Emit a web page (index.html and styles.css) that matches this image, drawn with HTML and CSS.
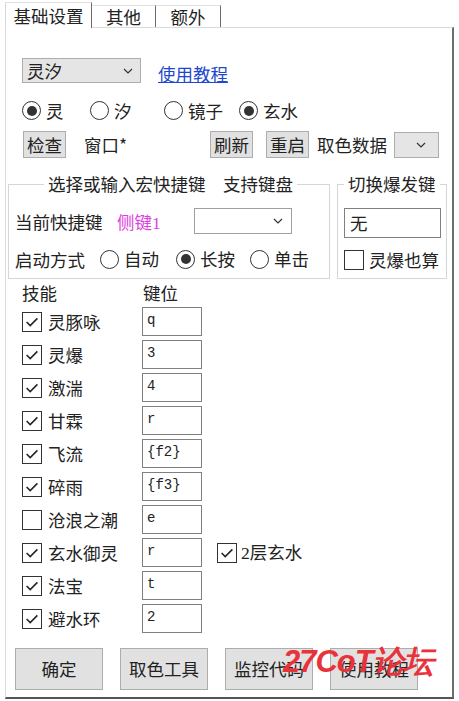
FILE: index.html
```html
<!DOCTYPE html>
<html lang="zh">
<head>
<meta charset="utf-8">
<link rel="stylesheet" href="styles.css">
</head>
<body>
<div class="window">
  <div class="tabs">
    <div class="tab active">基础设置</div>
    <div class="tab t2">其他</div>
    <div class="tab t3">额外</div>
  </div>
  <div class="panel">
    <div class="row-select">
      <div class="select sel-main"><span>灵汐</span><svg class="chev" width="10" height="6" viewBox="0 0 10 6"><path d="M1 1 L5 5 L9 1" fill="none" stroke="#333" stroke-width="1.2"/></svg></div>
      <a class="link">使用教程</a>
    </div>
    <div class="row-radio">
      <div class="ritem"><span class="radio on"></span><span>灵</span></div>
      <div class="ritem"><span class="radio"></span><span>汐</span></div>
      <div class="ritem"><span class="radio"></span><span>镜子</span></div>
      <div class="ritem"><span class="radio on"></span><span>玄水</span></div>
    </div>
    <div class="row-btns">
      <div class="btn-s">检查</div>
      <span class="win-label">窗口*</span>
      <div class="btn-s">刷新</div>
      <div class="btn-s b-restart">重启</div>
      <span class="color-label">取色数据</span>
      <div class="select sel-small"><svg class="chev" width="10" height="6" viewBox="0 0 10 6"><path d="M1 1 L5 5 L9 1" fill="none" stroke="#333" stroke-width="1.2"/></svg></div>
    </div>
    <div class="groups">
      <div class="group g1">
        <div class="gtitle t-g1">选择或输入宏快捷键　支持键盘</div>
        <div class="g1-row1">
          <span class="g1-label">当前快捷键</span>
          <span class="sidekey">侧键<span class="num">1</span></span>
          <div class="select sel-key"><svg class="chev" width="10" height="6" viewBox="0 0 10 6"><path d="M1 1 L5 5 L9 1" fill="none" stroke="#333" stroke-width="1.2"/></svg></div>
        </div>
        <div class="g1-row2">
          <span class="g1-label2">启动方式</span>
          <div class="ritem w76"><span class="radio"></span><span>自动</span></div>
          <div class="ritem w74"><span class="radio on"></span><span>长按</span></div>
          <div class="ritem"><span class="radio"></span><span>单击</span></div>
        </div>
      </div>
      <div class="group g2">
        <div class="gtitle t-g2">切换爆发键</div>
        <div class="tbox burst">无</div>
        <div class="g2-check"><span class="cb"></span><span class="cb-label">灵爆也算</span></div>
      </div>
    </div>
    <div class="skill-head"><span class="h-skill">技能</span><span>键位</span></div>
    <div class="skills">
      <div class="skill"><div class="sk-left"><span class="cb on"><svg viewBox="0 0 20 20"><path d="M4 10 L8 14 L16 6"/></svg></span><span class="cb-label">灵豚咏</span></div><div class="key">q</div></div>
      <div class="skill"><div class="sk-left"><span class="cb on"><svg viewBox="0 0 20 20"><path d="M4 10 L8 14 L16 6"/></svg></span><span class="cb-label">灵爆</span></div><div class="key">3</div></div>
      <div class="skill"><div class="sk-left"><span class="cb on"><svg viewBox="0 0 20 20"><path d="M4 10 L8 14 L16 6"/></svg></span><span class="cb-label">激湍</span></div><div class="key">4</div></div>
      <div class="skill"><div class="sk-left"><span class="cb on"><svg viewBox="0 0 20 20"><path d="M4 10 L8 14 L16 6"/></svg></span><span class="cb-label">甘霖</span></div><div class="key">r</div></div>
      <div class="skill"><div class="sk-left"><span class="cb on"><svg viewBox="0 0 20 20"><path d="M4 10 L8 14 L16 6"/></svg></span><span class="cb-label">飞流</span></div><div class="key">{f2}</div></div>
      <div class="skill"><div class="sk-left"><span class="cb on"><svg viewBox="0 0 20 20"><path d="M4 10 L8 14 L16 6"/></svg></span><span class="cb-label">碎雨</span></div><div class="key">{f3}</div></div>
      <div class="skill"><div class="sk-left"><span class="cb"></span><span class="cb-label">沧浪之潮</span></div><div class="key">e</div></div>
      <div class="skill"><div class="sk-left"><span class="cb on"><svg viewBox="0 0 20 20"><path d="M4 10 L8 14 L16 6"/></svg></span><span class="cb-label">玄水御灵</span></div><div class="key">r</div>
        <div class="extra"><span class="cb on"><svg viewBox="0 0 20 20"><path d="M4 10 L8 14 L16 6"/></svg></span><span class="extra-label"><span class="num">2</span>层玄水</span></div></div>
      <div class="skill"><div class="sk-left"><span class="cb on"><svg viewBox="0 0 20 20"><path d="M4 10 L8 14 L16 6"/></svg></span><span class="cb-label">法宝</span></div><div class="key">t</div></div>
      <div class="skill"><div class="sk-left"><span class="cb on"><svg viewBox="0 0 20 20"><path d="M4 10 L8 14 L16 6"/></svg></span><span class="cb-label">避水环</span></div><div class="key">2</div></div>
    </div>
    <div class="bottom-btns">
      <div class="btn-l">确定</div>
      <div class="btn-l">取色工具</div>
      <div class="btn-l">监控代码</div>
      <div class="btn-l">使用教程</div>
    </div>
  </div>
  <div class="watermark">27CoT论坛</div>
</div>
</body>
</html>
```
FILE: styles.css
```css
* { box-sizing: border-box; }
body {
  margin: 0;
  background: #fff;
  font-family: "Noto Sans CJK SC", sans-serif;
  font-size: 17.5px;
  color: #222;
}
.window {
  width: 459px;
  height: 701px;
  position: relative;
  overflow: hidden;
  background: #fff;
}
.tabs {
  display: flex;
  align-items: flex-end;
  height: 27px;
  padding-left: 5px;
}
.tab {
  height: 22px;
  border-top: 1px solid #e2e2e2;
  border-right: 1px solid #6d6d6d;
  display: flex;
  align-items: center;
  justify-content: center;
  line-height: 20px;
  background: #fff;
}
.tab.active {
  width: 87px;
  height: 26px;
  margin-bottom: -1px;
  border-left: 1px solid #d8d8d8;
  position: relative;
  z-index: 1;
}
.t2 { width: 64px; }
.t3 { width: 65px; }
.panel {
  margin-left: 5px;
  width: 449px;
  height: 672px;
  border-left: 1px solid #dadada;
  border-top: 1px solid #dadada;
  border-right: 2px solid #6d6d6d;
  border-bottom: 2px solid #555;
}
.select {
  background: #e5e5e5;
  border: 1px solid #adadad;
  display: flex;
  align-items: center;
  justify-content: space-between;
  line-height: 20px;
}
.row-select {
  display: flex;
  align-items: flex-start;
  margin: 30px 0 0 16px;
  height: 25px;
}
.sel-main {
  width: 119px;
  height: 25px;
  padding: 0 7px 0 4px;
}
.link {
  margin: 6px 0 0 17px;
  line-height: 20px;
  color: #1e48d0;
  text-decoration: underline;
}
.row-radio {
  display: grid;
  grid-template-columns: 68px 74px 75px auto;
  margin: 18px 0 0 16px;
  height: 19px;
}
.ritem {
  display: flex;
  align-items: center;
  gap: 5px;
  line-height: 20px;
  height: 19px;
}
.radio {
  width: 19px;
  height: 19px;
  border: 1px solid #333;
  border-radius: 50%;
  display: flex;
  align-items: center;
  justify-content: center;
  flex: none;
  background: #fff;
}
.radio.on::after {
  content: "";
  width: 10px;
  height: 10px;
  border-radius: 50%;
  background: #333;
}
.row-btns {
  display: flex;
  align-items: center;
  margin: 11px 0 0 17px;
  height: 27px;
}
.btn-s {
  width: 43px;
  height: 27px;
  background: #e1e1e1;
  border: 1px solid #adadad;
  display: flex;
  align-items: center;
  justify-content: center;
  line-height: 20px;
}
.win-label {
  width: 144px;
  padding-left: 18px;
}
.b-restart { margin-left: 13px; }
.color-label {
  margin-left: 8px;
  width: 77px;
}
.sel-small {
  width: 45px;
  height: 26px;
  justify-content: flex-end;
  padding-right: 12px;
}
.groups {
  display: flex;
  gap: 7px;
  margin: 26px 0 0 2px;
}
.group {
  border: 1px solid #d6d6d6;
  height: 95px;
}
.g1 { width: 322px; }
.g2 { width: 110px; }
.gtitle {
  width: fit-content;
  margin-top: -11px;
  padding: 0 4px;
  background: #fff;
  line-height: 20px;
}
.t-g1 { margin-left: 35px; }
.t-g2 { margin-left: 6px; }
.g1-row1 {
  display: flex;
  align-items: center;
  margin: 14px 0 0 6px;
  height: 26px;
}
.g1-label { width: 102px; }
.sidekey {
  width: 77px;
  color: #dd44dd;
}
.num { font-family: "Liberation Serif", serif; }
.sel-key {
  width: 98px;
  height: 26px;
  background: #fff;
  border-color: #a0a0a0;
  justify-content: flex-end;
  padding-right: 8px;
}
.g1-row2 {
  display: flex;
  align-items: center;
  margin: 15px 0 0 6px;
  height: 20px;
}
.g1-label2 { width: 85px; }
.w76 { width: 76px; }
.w74 { width: 74px; }
.tbox {
  border: 1px solid #808080;
  background: #fff;
}
.burst {
  margin: 14px 0 0 6px;
  width: 97px;
  height: 30px;
  padding-left: 5px;
  line-height: 28px;
}
.g2-check {
  display: flex;
  align-items: center;
  margin: 12px 0 0 6px;
  height: 20px;
}
.cb {
  width: 20px;
  height: 20px;
  border: 1px solid #333;
  background: #fff;
  flex: none;
  display: block;
}
.cb svg {
  display: block;
  width: 18px;
  height: 18px;
}
.cb svg path {
  fill: none;
  stroke: #222;
  stroke-width: 1.7;
}
.cb-label {
  margin-left: 5px;
  line-height: 20px;
}
.skill-head {
  display: flex;
  margin: 4px 0 0 16px;
  height: 20px;
  line-height: 20px;
}
.h-skill { width: 121px; }
.skills {
  display: flex;
  flex-direction: column;
  gap: 4px;
  margin: 4px 0 0 16px;
}
.skill {
  display: flex;
  align-items: center;
  height: 29px;
}
.sk-left {
  display: flex;
  align-items: center;
  width: 120px;
}
.sk-left .cb-label { margin-left: 6px; }
.key {
  width: 60px;
  height: 29px;
  border: 1px solid #808080;
  padding: 3px 0 0 4px;
  font-family: "Liberation Mono", monospace;
  font-size: 14px;
  line-height: 18px;
  color: #222;
}
.extra {
  display: flex;
  align-items: center;
  margin-left: 15px;
}
.extra-label {
  margin-left: 4px;
  line-height: 20px;
}
.bottom-btns {
  display: flex;
  gap: 17px;
  margin: 15px 0 0 9px;
}
.btn-l {
  width: 88px;
  height: 42px;
  background: #e1e1e1;
  border: 1px solid #adadad;
  display: flex;
  align-items: center;
  justify-content: center;
  line-height: 20px;
}
.watermark {
  position: absolute;
  left: 283px;
  top: 638px;
  font-family: "Liberation Sans", sans-serif;
  font-size: 31px;
  font-weight: 700;
  font-style: italic;
  letter-spacing: -1px;
  color: #e8333a;
  line-height: 48px;
  white-space: nowrap;
}
```
